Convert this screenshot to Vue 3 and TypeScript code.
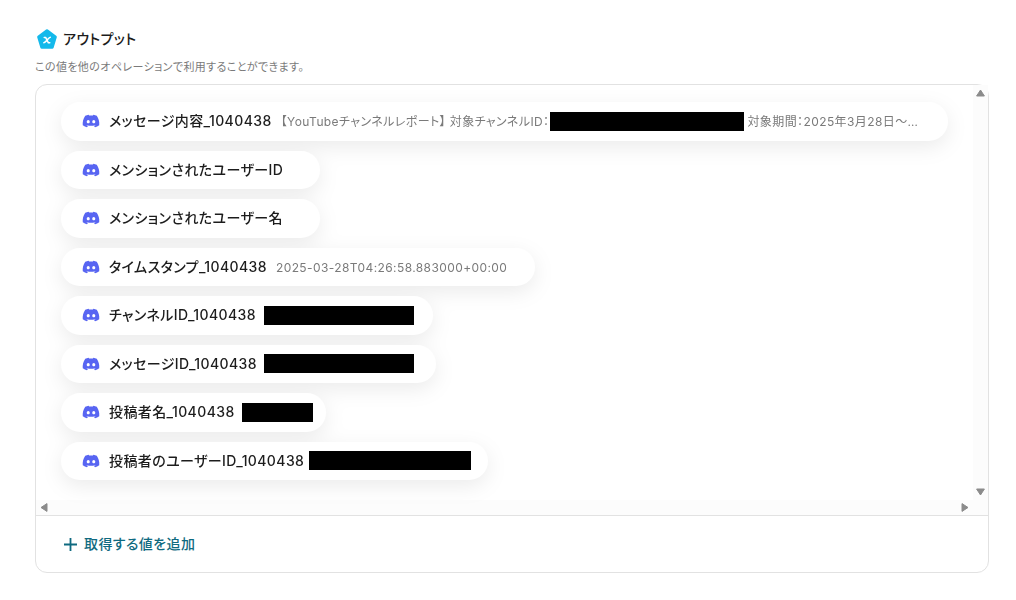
<script setup lang="ts">
interface Mask {
  slot: number
  left: number
  width: number
}

interface OutputItem {
  name: string
  value?: string
  mask?: Mask
}

const items: OutputItem[] = [
  { name: 'メンションされたユーザーID', value: '' },
  { name: 'メンションされたユーザー名', value: '' },
  { name: 'タイムスタンプ_1040438', value: '2025-03-28T04:26:58.883000+00:00' },
  { name: 'チャンネルID_1040438', mask: { slot: 140, left: -1, width: 150 } },
  { name: 'メッセージID_1040438', mask: { slot: 142, left: -2, width: 150 } },
  { name: '投稿者名_1040438', mask: { slot: 54, left: -2, width: 71 } },
  { name: '投稿者のユーザーID_1040438', mask: { slot: 147, left: -4, width: 162 } },
]

const discordPath =
  'M20.317 4.37a19.79 19.79 0 00-4.885-1.515.074.074 0 00-.079.037c-.21.375-.444.865-.608 1.25-1.845-.276-3.68-.276-5.487 0-.164-.393-.406-.874-.618-1.25a.077.077 0 00-.078-.037 19.736 19.736 0 00-4.885 1.515.07.07 0 00-.033.028C.533 9.046-.319 13.58.099 18.058a.082.082 0 00.031.056c2.053 1.508 4.041 2.423 5.993 3.03a.078.078 0 00.084-.028c.462-.63.873-1.295 1.226-1.994a.076.076 0 00-.041-.106c-.653-.248-1.274-.55-1.872-.892a.077.077 0 01-.008-.128c.126-.094.252-.192.372-.291a.074.074 0 01.078-.01c3.928 1.793 8.18 1.793 12.061 0a.074.074 0 01.079.009c.12.099.246.198.373.292a.077.077 0 01-.007.128 12.299 12.299 0 01-1.873.891.077.077 0 00-.041.107c.36.698.772 1.363 1.225 1.993a.076.076 0 00.084.029c1.961-.607 3.95-1.522 6.003-3.03a.077.077 0 00.031-.055c.5-5.177-.838-9.674-3.549-13.66a.061.061 0 00-.031-.029zM8.02 15.331c-1.183 0-2.157-1.086-2.157-2.419s.956-2.419 2.157-2.419c1.211 0 2.176 1.095 2.157 2.419 0 1.333-.956 2.419-2.157 2.419zm7.975 0c-1.183 0-2.157-1.086-2.157-2.419s.955-2.419 2.157-2.419c1.211 0 2.176 1.095 2.157 2.419 0 1.333-.946 2.419-2.157 2.419z'
</script>

<template>
  <section class="output">
    <header class="heading">
      <svg class="badge" viewBox="0 0 20 20" aria-hidden="true">
        <path d="M10 1.8 L18.3 8 L15.2 18.2 H4.8 L1.7 8 Z" fill="#14b9eb" stroke="#14b9eb" stroke-width="3" stroke-linejoin="round" />
        <path d="M7.2 8.4 H8.6 L11.4 13.8 H12.8 M13.3 8.3 C11.8 8.3 8.6 13.8 6.8 13.8" fill="none" stroke="#fff" stroke-width="1.5" stroke-linecap="round" stroke-linejoin="round" />
      </svg>
      <h2>アウトプット</h2>
    </header>
    <p class="note">この値を他のオペレーションで利用することができます。</p>

    <div class="panel">
      <div class="scroller">
        <ul class="list">
          <li class="pill wide">
            <svg class="discord" viewBox="-1 -1 26 26" aria-hidden="true"><path :d="discordPath" /></svg>
            <span class="name">メッセージ内容_1040438</span>
            <span class="value">【YouTubeチャンネルレポート】 対象チャンネルID：</span>
            <span class="bar long"></span>
            <span class="value tail">対象期間：2025年3月28日〜…</span>
          </li>
          <li v-for="item in items" :key="item.name" class="pill">
            <svg class="discord" viewBox="-1 -1 26 26" aria-hidden="true"><path :d="discordPath" /></svg>
            <span class="name">{{ item.name }}</span>
            <span v-if="item.mask" class="slot" :style="{ width: item.mask.slot + 'px' }">
              <span class="bar over" :style="{ left: item.mask.left + 'px', width: item.mask.width + 'px' }"></span>
            </span>
            <span v-else class="value">{{ item.value }}</span>
          </li>
        </ul>
        <div class="track vertical" aria-hidden="true">
          <svg viewBox="0 0 9 8"><path d="M4.5 1 L8.4 7 H0.6 Z" /></svg>
          <svg viewBox="0 0 9 8"><path d="M4.5 7 L8.4 1 H0.6 Z" /></svg>
        </div>
        <div class="track horizontal" aria-hidden="true">
          <svg viewBox="0 0 8 9"><path d="M1 4.5 L7 0.6 V8.4 Z" /></svg>
          <svg viewBox="0 0 8 9"><path d="M7 4.5 L1 0.6 V8.4 Z" /></svg>
        </div>
        <div class="track"></div>
      </div>
      <footer class="footer">
        <button type="button" class="add">
          <svg viewBox="0 0 13 13" aria-hidden="true"><path d="M6.5 0 V13 M0 6.5 H13" /></svg>
          <span>取得する値を追加</span>
        </button>
      </footer>
    </div>
  </section>
</template>

<style>
body {
  margin: 0;
  background: #fff;
}
</style>

<style scoped>
.output {
  padding: 28px 27px 27px 35px;
  font-family: Inter, "Noto Sans CJK JP", sans-serif;
  font-feature-settings: "palt";
  letter-spacing: 0.025em;
  color: #1c1c1c;
}
.heading {
  display: flex;
  align-items: center;
  gap: 6px;
  padding-left: 2px;
  height: 22px;
}
.badge {
  width: 20px;
  height: 20px;
}
h2 {
  margin: 0;
  font-size: 14px;
  line-height: 22px;
  font-weight: 500;
}
.note {
  margin: 8px 0;
  font-size: 11px;
  line-height: 18px;
  color: #7a7a7a;
}
.panel {
  border: 1px solid #e2e2e2;
  border-radius: 12px;
}
.scroller {
  display: grid;
  grid-template-columns: minmax(0, 1fr) 15px;
  grid-template-rows: auto 15px;
}
.list {
  display: flex;
  flex-direction: column;
  align-items: flex-start;
  gap: 10px;
  min-height: 378px;
  margin: 0;
  padding: 17px 25px 20px;
  list-style: none;
  filter: drop-shadow(0 6px 10px rgba(0, 0, 0, 0.08));
}
.pill {
  flex: 1;
  display: flex;
  align-items: center;
  gap: 8px;
  box-sizing: border-box;
  max-width: 100%;
  padding: 8px 28px 8px 21px;
  border-radius: 20px;
  background: #fff;
  white-space: nowrap;
}
.wide {
  width: 100%;
}
.discord {
  flex: none;
  width: 18px;
  height: 18px;
  margin-right: 1px;
  fill: #5865f2;
}
.name,
.value {
  align-self: baseline;
}
.name {
  flex: none;
  margin-right: 1px;
  font-size: 14px;
  line-height: 22px;
  font-weight: 500;
}
.value {
  font-size: 12px;
  line-height: 20px;
  color: #7a7a7a;
}
.bar {
  height: 19px;
  background: #000;
}
.long {
  flex: none;
  width: 194px;
  margin-left: -7px;
}
.tail {
  margin-left: -5px;
}
.slot {
  position: relative;
  height: 19px;
}
.over {
  position: absolute;
  top: 0;
}
.track {
  display: flex;
  justify-content: space-between;
  align-items: center;
  background: #fcfcfc;
}
.track svg {
  fill: #8b8b8b;
  stroke: #8b8b8b;
  stroke-width: 1;
  stroke-linejoin: round;
}
.vertical {
  flex-direction: column;
  padding: 4px 0;
}
.vertical svg {
  width: 9px;
  height: 8px;
}
.horizontal {
  padding: 0 4px;
}
.horizontal svg {
  width: 8px;
  height: 9px;
}
.footer {
  padding: 16px 28px;
  border-top: 1px solid #e2e2e2;
}
.add {
  display: flex;
  align-items: center;
  gap: 7px;
  padding: 0;
  border: 0;
  background: none;
  font: inherit;
  font-size: 14px;
  line-height: 24px;
  font-weight: 500;
  letter-spacing: inherit;
  font-feature-settings: "palt";
  color: #0f6a80;
  cursor: pointer;
}
.add svg {
  width: 13px;
  height: 13px;
  fill: none;
  stroke: currentColor;
  stroke-width: 1.8;
}
</style>
